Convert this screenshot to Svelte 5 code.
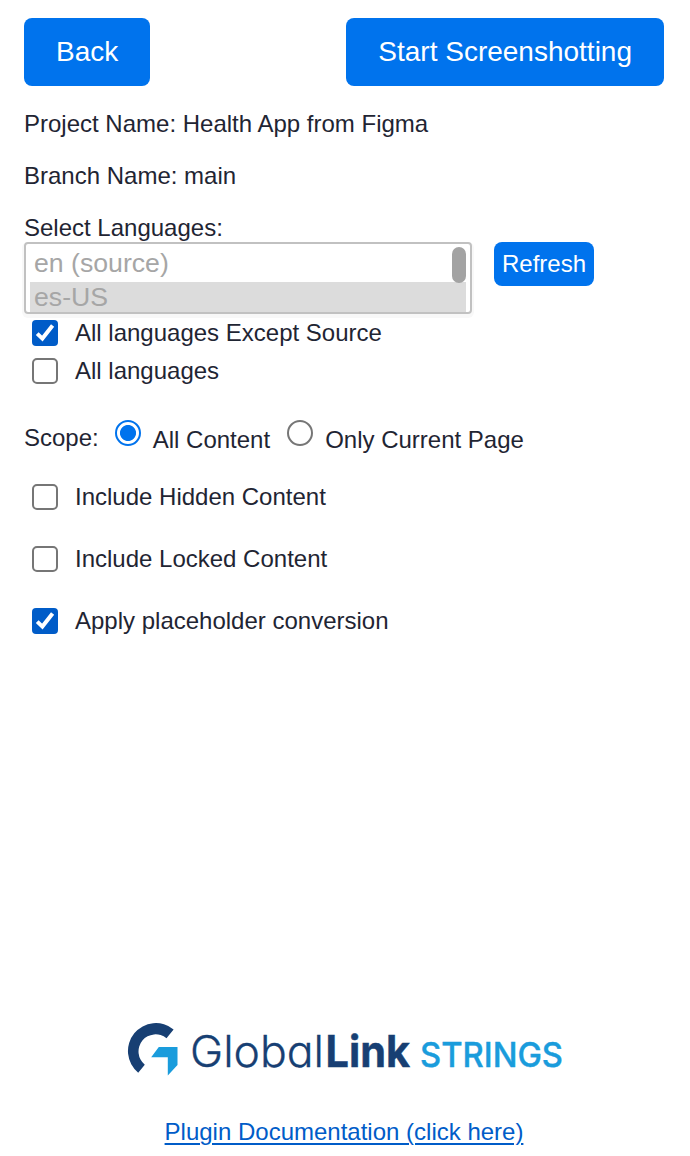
<script lang="ts">
  const projectName = 'Health App from Figma';
  const branchName = 'main';
  const languages = ['en (source)', 'es-US'];

  let selected = $state('es-US');
  let exceptSource = $state(true);
  let allLanguages = $state(false);
  let scope = $state('all');
  let includeHidden = $state(false);
  let includeLocked = $state(false);
  let placeholders = $state(true);
</script>

{#snippet tick(checked: boolean)}
  <svg class="tick" class:checked viewBox="0 0 26 26" aria-hidden="true">
    {#if checked}
      <path d="M5.2 13.6 10.4 18.6 20.6 5.6" />
    {/if}
  </svg>
{/snippet}

<main class="plugin">
  <header>
    <button class="action" type="button">Back</button>
    <button class="action" type="button">Start Screenshotting</button>
  </header>

  <p>Project Name: {projectName}</p>
  <p>Branch Name: {branchName}</p>

  <section class="languages">
    <div>Select Languages:</div>
    <div class="language-row">
      <div class="listbox" role="listbox" aria-disabled="true">
        {#each languages as language}
          <div class="option" class:selected={language === selected} role="option" aria-selected={language === selected}>
            {language}
          </div>
        {/each}
        <span class="thumb"></span>
      </div>
      <button class="refresh" type="button">Refresh</button>
    </div>
    <label class="check">
      <input type="checkbox" bind:checked={exceptSource} />
      {@render tick(exceptSource)}
      All languages Except Source
    </label>
    <label class="check">
      <input type="checkbox" bind:checked={allLanguages} />
      {@render tick(allLanguages)}
      All languages
    </label>
  </section>

  <div class="scope">
    <span class="scope-title">Scope:</span>
    <label>
      <input type="radio" name="scope" value="all" bind:group={scope} />
      <span class="scope-text">All Content</span>
    </label>
    <label>
      <input type="radio" name="scope" value="page" bind:group={scope} />
      <span class="scope-text">Only Current Page</span>
    </label>
  </div>

  <section class="options">
    <label class="check">
      <input type="checkbox" bind:checked={includeHidden} />
      {@render tick(includeHidden)}
      Include Hidden Content
    </label>
    <label class="check">
      <input type="checkbox" bind:checked={includeLocked} />
      {@render tick(includeLocked)}
      Include Locked Content
    </label>
    <label class="check">
      <input type="checkbox" bind:checked={placeholders} />
      {@render tick(placeholders)}
      Apply placeholder conversion
    </label>
  </section>

  <footer>
    <svg class="logo" width="450" height="80" viewBox="-1 0 450 80" role="img" aria-label="GlobalLink Strings">
      <path
        fill="#173f73"
        d="M18.2 62.7A27.5 27.5 0 0 1 53.6 19.4L46.5 28.2A16.3 16.3 0 0 0 24.8 54.7Z"
      />
      <path fill="#1a9cdc" d="M38.8 37H57.5V55L47.8 65.5V47.2H31.2Z" />
      <text class="brand light" x="70" y="57.3" textLength="134" lengthAdjust="spacingAndGlyphs">Global</text>
      <text class="brand bold" x="205.5" y="57.3" textLength="84.5" lengthAdjust="spacingAndGlyphs">Link</text>
      <text class="product" x="300" y="57.1" textLength="143" lengthAdjust="spacingAndGlyphs">STRINGS</text>
    </svg>
    <a href="#docs">Plugin Documentation (click here)</a>
  </footer>
</main>

<style>
  :global(body) {
    background: #fff;
  }

  .plugin {
    box-sizing: border-box;
    height: 1156px;
    padding: 18px 26px 10px 24px;
    display: flex;
    flex-direction: column;
    font-family: 'Liberation Sans', Arial, sans-serif;
    font-size: 24px;
    line-height: 28px;
    color: #1f2533;
  }

  header {
    display: flex;
    justify-content: space-between;
  }

  button {
    border: none;
    border-radius: 8px;
    background: #0073ed;
    color: #fff;
    font-family: inherit;
    white-space: nowrap;
  }

  .action {
    height: 68px;
    padding: 0 32px;
    font-size: 28px;
  }

  p {
    margin: 24px 0 0;
  }

  .languages {
    margin-top: 24px;
  }

  .language-row {
    display: flex;
    align-items: flex-start;
    gap: 22px;
  }

  .listbox {
    position: relative;
    box-sizing: border-box;
    width: 448px;
    height: 72px;
    padding: 4px;
    overflow: hidden;
    border: 2px solid #c1c1c1;
    border-radius: 4px;
    box-shadow: 0 2px 0 2px #f8f8f8;
    font-size: 26.67px;
    line-height: 30px;
    color: #a6a6a6;
  }

  .option {
    height: 34px;
    padding-left: 4px;
  }

  .option.selected {
    background: #dcdcdc;
  }

  .thumb {
    position: absolute;
    top: 3px;
    right: 4px;
    width: 14px;
    height: 36px;
    border-radius: 7px;
    background: #a3a3a3;
  }

  .refresh {
    width: 100px;
    height: 44px;
    padding: 0;
    font-size: 24px;
  }

  .check {
    display: flex;
    align-items: center;
    height: 38px;
    padding-left: 8px;
  }

  .check input {
    position: absolute;
    opacity: 0;
    margin: 0;
  }

  .tick {
    box-sizing: border-box;
    width: 26px;
    height: 26px;
    margin-right: 17px;
    border: 2px solid #767676;
    border-radius: 5px;
  }

  .tick.checked {
    border: none;
    border-radius: 4px;
    background: #005cc8;
  }

  .tick path {
    fill: none;
    stroke: #fff;
    stroke-width: 4;
  }

  .scope {
    display: flex;
    align-items: flex-start;
    height: 32px;
    margin-top: 30px;
  }

  .scope-title {
    margin: 4px 16px 0 0;
  }

  .scope label {
    display: flex;
    align-items: flex-start;
    margin-right: 17px;
  }

  .scope-text {
    margin-top: 6px;
  }

  .scope input {
    appearance: none;
    box-sizing: border-box;
    width: 26px;
    height: 26px;
    margin: 0 12px 0 0;
    border: 2px solid #767676;
    border-radius: 50%;
  }

  .scope input:checked {
    border-color: #0073ed;
    background: radial-gradient(circle, #0073ed 7.6px, #fff 8.4px);
  }

  .options {
    display: flex;
    flex-direction: column;
    gap: 24px;
    margin-top: 26px;
  }

  footer {
    display: flex;
    flex-direction: column;
    align-items: center;
    gap: 28px;
    margin-top: auto;
  }

  .logo {
    display: block;
  }

  .brand {
    font-family: Inter, sans-serif;
    font-size: 44px;
    font-feature-settings: 'cv11', 'ss03';
    fill: #173f73;
  }

  .light {
    font-weight: 300;
    stroke: #173f73;
    stroke-width: 0.3;
  }

  .bold {
    font-weight: 700;
    stroke: #173f73;
    stroke-width: 0.5;
  }

  .product {
    font-family: Inter, sans-serif;
    font-size: 34px;
    font-weight: 500;
    fill: #1a9cdc;
    stroke: #1a9cdc;
    stroke-width: 0.4;
  }

  a {
    color: #005cc8;
    text-underline-offset: 3px;
    text-decoration-thickness: 2px;
  }
</style>
